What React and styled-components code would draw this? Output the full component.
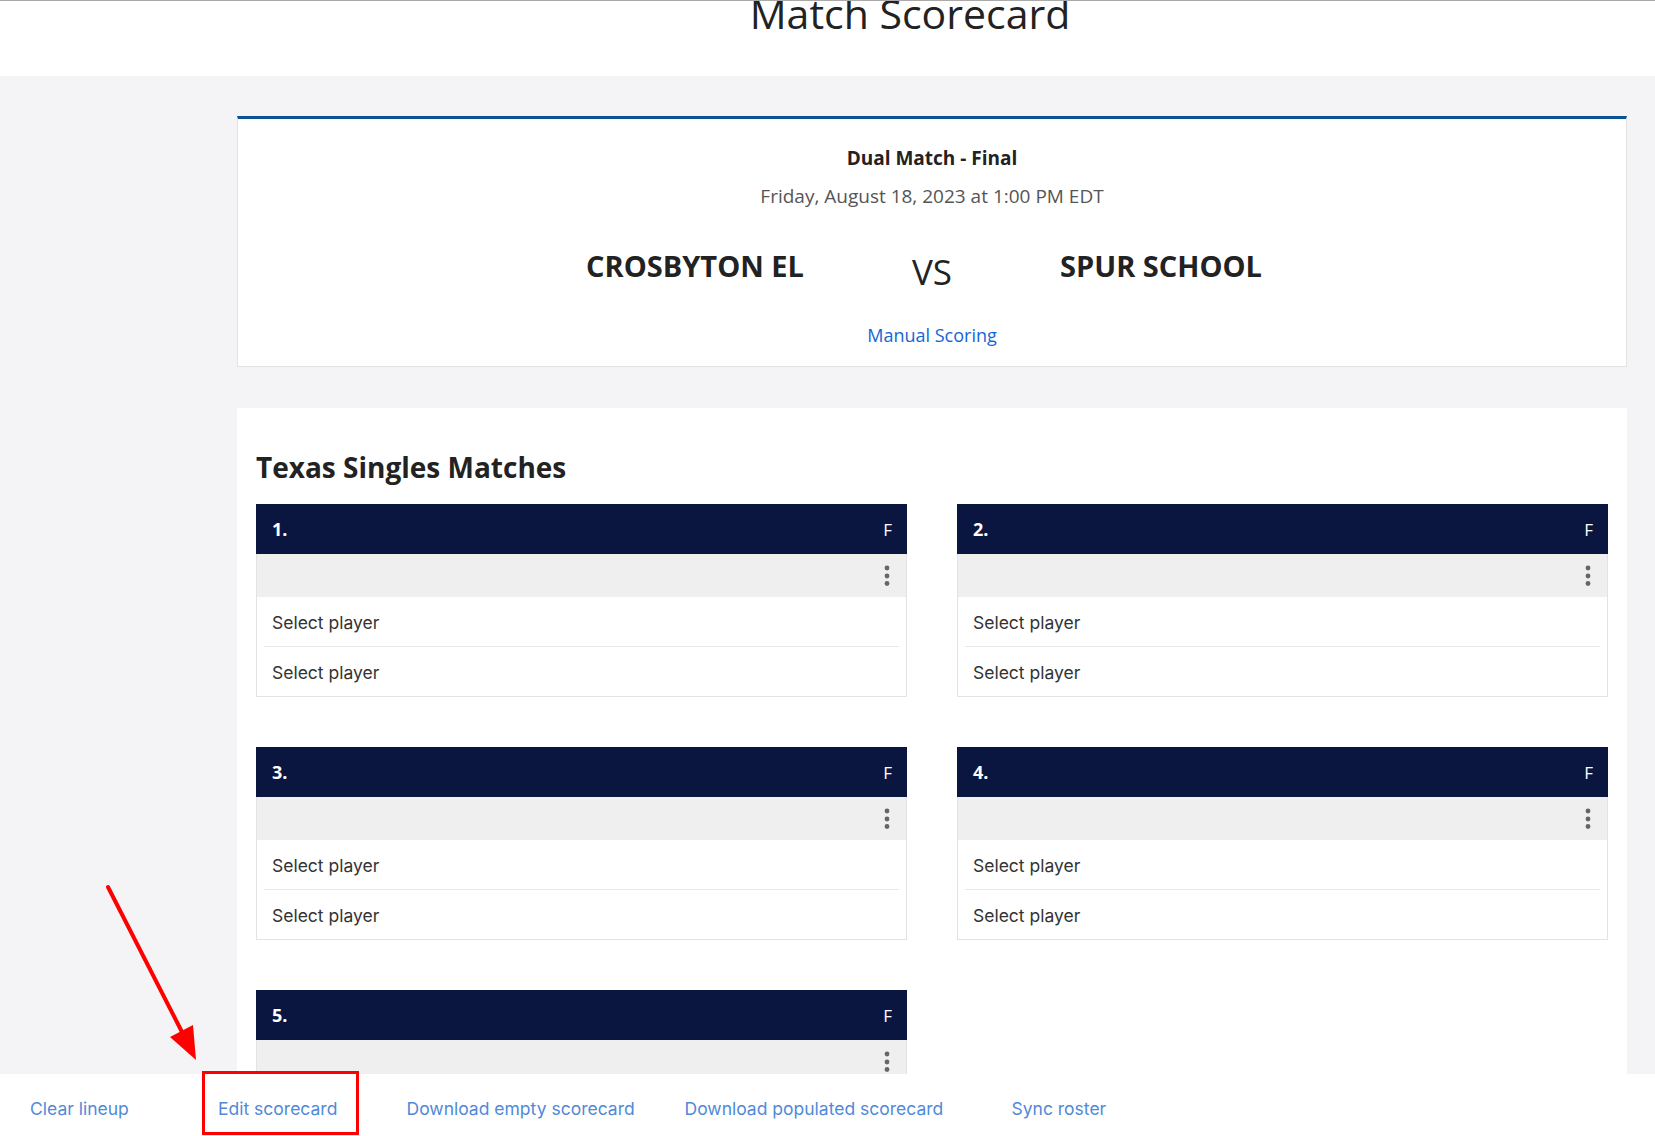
import React from 'react'
import styled, { createGlobalStyle } from 'styled-components'

const GlobalStyle = createGlobalStyle`
    * { box-sizing: border-box; }
    html, body {
        margin: 0;
        padding: 0;
        background: #ffffff;
        font-family: Inter, "Open Sans", sans-serif;
    }
`

const matches = [1, 2, 3, 4, 5]

const footerLinks = [
    { label: 'Clear lineup', width: 188 },
    { label: 'Edit scorecard', width: 188.5, marked: true },
    { label: 'Download empty scorecard', width: 278 },
    { label: 'Download populated scorecard', width: 327 },
    { label: 'Sync roster', width: 200 },
]

const Kebab = () => (
    <svg width="6" height="22" viewBox="0 0 6 22">
        <circle cx="3" cy="3" r="2.4" fill="#666" />
        <circle cx="3" cy="11" r="2.4" fill="#666" />
        <circle cx="3" cy="18.5" r="2.4" fill="#666" />
    </svg>
)

const MatchCard = ({ number }) => (
    <Card>
        <CardHead>
            <span className='num'>{number}.</span>
            <span className='state'>F</span>
        </CardHead>
        <CardBody>
            <Toolbar>
                <Kebab />
            </Toolbar>
            <PlayerRow>Select player</PlayerRow>
            <PlayerRow last>Select player</PlayerRow>
        </CardBody>
    </Card>
)

const App = () => {
    return (
        <Page>
            <GlobalStyle />
            <TopBar>
                <h1>Match Scorecard</h1>
            </TopBar>
            <Main>
                <InfoCard>
                    <h3>Dual Match - Final</h3>
                    <div className='date'>Friday, August 18, 2023 at 1:00 PM EDT</div>
                    <Teams>
                        <div className='home'>CROSBYTON EL</div>
                        <div className='vs'>VS</div>
                        <div className='away'>SPUR SCHOOL</div>
                    </Teams>
                    <a className='manual'>Manual Scoring</a>
                </InfoCard>

                <Section>
                    <h2>Texas Singles Matches</h2>
                    <Grid>
                        {matches.map(n => <MatchCard key={n} number={n} />)}
                    </Grid>
                </Section>
            </Main>

            <Footer>
                {footerLinks.map(l => (
                    <FooterLink key={l.label} $w={l.width} $marked={l.marked}>
                        <span>{l.label}</span>
                    </FooterLink>
                ))}
            </Footer>

            <Arrow width="230" height="200" viewBox="0 0 230 200">
                <line x1="108" y1="887" x2="182" y2="1032" stroke="#ff0000" strokeWidth="4" strokeLinecap="round" transform="translate(0 -870)" />
                <polygon points="196,1060 170,1037 193,1025" fill="#ff0000" transform="translate(0 -870)" />
            </Arrow>
        </Page>
    )
}

export default App

const Page = styled.div`
    position: relative;
    height: 100vh;
    overflow: hidden;
    background: #f4f4f6;
`

const TopBar = styled.header`
    height: 76px;
    background: #ffffff;
    border-top: 1px solid #aaaaaa;
    padding-left: 165px;
    text-align: center;
    overflow: hidden;

    h1 {
        margin: -8px 0 0;
        font-family: "Open Sans", sans-serif;
        font-weight: 400;
        font-size: 41px;
        line-height: 1;
        color: #222;
    }
`

const Main = styled.main`
    padding: 40px 28px 0 237px;
`

const InfoCard = styled.div`
    display: flex;
    flex-direction: column;
    align-items: center;
    background: #ffffff;
    border: 1px solid #e2e2e2;
    border-top: 3px solid #0b5394;
    padding: 27px 0 19px;
    font-family: "Open Sans", sans-serif;

    h3 {
        margin: 0;
        font-size: 19px;
        line-height: 24px;
        font-weight: 700;
        color: #222;
    }

    .date {
        margin-top: 14px;
        font-size: 19px;
        line-height: 24px;
        color: #555;
    }

    .manual {
        margin-top: 33px;
        font-size: 18px;
        line-height: 24px;
        color: #1565d8;
        cursor: pointer;
    }
`

const Teams = styled.div`
    margin-top: 40px;
    width: 100%;
    display: grid;
    grid-template-columns: 1fr auto 1fr;
    column-gap: 108px;
    align-items: start;

    .home, .away {
        font-size: 29px;
        line-height: 36px;
        font-weight: 700;
        color: #222;
    }

    .home { text-align: right; }
    .away { text-align: left; }

    .vs {
        margin-top: 6px;
        font-size: 35px;
        line-height: 36px;
        color: #222;
    }
`

const Section = styled.section`
    margin-top: 41px;
    background: #ffffff;
    padding: 41px 19px 40px;

    h2 {
        margin: 0 0 19px;
        font-family: "Open Sans", sans-serif;
        font-size: 28px;
        line-height: 36px;
        font-weight: 700;
        color: #222;
    }
`

const Grid = styled.div`
    display: grid;
    grid-template-columns: 1fr 1fr;
    gap: 50px;
`

const Card = styled.div`
    display: flex;
    flex-direction: column;
`

const CardHead = styled.div`
    height: 50px;
    display: flex;
    align-items: center;
    justify-content: space-between;
    padding: 0 15px 0 16px;
    background: #0a1640;
    color: #ffffff;
    font-family: "Open Sans", sans-serif;

    .num {
        font-weight: 700;
        font-size: 18px;
    }

    .state {
        font-size: 17px;
    }
`

const CardBody = styled.div`
    border: 1px solid #e3e3e3;
    border-top: none;
    padding: 0 7px;
`

const Toolbar = styled.div`
    height: 43px;
    margin: 0 -7px;
    display: flex;
    align-items: center;
    justify-content: flex-end;
    padding-right: 16px;
    background: #efefef;
`

const PlayerRow = styled.div`
    height: ${p => (p.last ? '49px' : '50px')};
    display: flex;
    align-items: center;
    padding: 2px 0 0 8px;
    font-size: 17.5px;
    color: #333;
    border-bottom: ${p => (p.last ? 'none' : '1px solid #e8e8e8')};
`

const Footer = styled.footer`
    position: absolute;
    left: 0;
    right: 0;
    bottom: 0;
    height: 62px;
    background: #ffffff;
    display: flex;
    align-items: center;
    padding: 8px 0 0 30px;
`

const FooterLink = styled.a`
    width: ${p => p.$w}px;
    flex-shrink: 0;
    font-size: 17.5px;
    line-height: 24px;
    color: #5089da;
    cursor: pointer;

    span {
        position: relative;
    }

    span::after {
        content: '';
        display: ${p => (p.$marked ? 'block' : 'none')};
        position: absolute;
        left: -16px;
        right: -22px;
        top: -27px;
        bottom: -16px;
        border: 3px solid #ff0000;
    }
`

const Arrow = styled.svg`
    position: absolute;
    left: 0;
    top: 870px;
    pointer-events: none;
`
